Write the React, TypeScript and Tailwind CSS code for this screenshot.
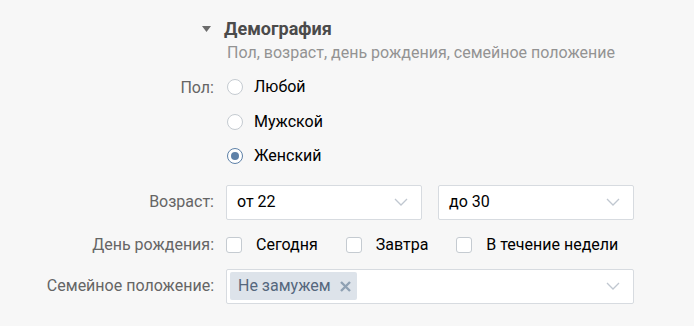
import type { ReactNode } from 'react'

function Chevron() {
  return (
    <svg width="14" height="8" viewBox="0 0 14 8" fill="none" className="shrink-0">
      <path d="M1 1l6 6 6-6" stroke="#c0c7d0" strokeWidth="1.3" />
    </svg>
  )
}

function Radio({ label, checked }: { label: string; checked?: boolean }) {
  return (
    <div className="flex h-[34.5px] items-center gap-[11px]">
      <span
        className={
          checked
            ? 'flex h-4 w-4 items-center justify-center rounded-full border border-[#5e81a8] bg-white'
            : 'h-4 w-4 rounded-full border border-[#c5cbd1] bg-white'
        }
      >
        {checked && <span className="h-[8px] w-[8px] rounded-full bg-[#5e81a8]" />}
      </span>
      <span className="text-[16px] text-black">{label}</span>
    </div>
  )
}

function Checkbox({ label }: { label: string }) {
  return (
    <div className="flex items-center gap-[14px]">
      <span className="h-4 w-4 rounded-[3px] border border-[#c5cbd1] bg-white" />
      <span className="text-[16px] text-black">{label}</span>
    </div>
  )
}

function Select({ children }: { children: ReactNode }) {
  return (
    <div className="flex h-[35px] flex-1 items-center justify-between rounded-[2px] border border-[#d7dbe0] bg-white pl-[10px] pr-[13px]">
      <div className="flex items-center">{children}</div>
      <Chevron />
    </div>
  )
}

function Row({ label, children, className }: { label: string; children: ReactNode; className?: string }) {
  return (
    <div className={`flex ${className ?? ''}`}>
      <div className="w-[214px] shrink-0 text-right text-[16px] text-[#656565]">{label}</div>
      <div className="ml-3 w-[408px]">{children}</div>
    </div>
  )
}

export default function App() {
  return (
    <div className="h-[326px] w-[694px] bg-[#f7f7f7] font-['Roboto',sans-serif]">
      <div className="flex items-center pt-[15px]">
        <svg width="9" height="6" viewBox="0 0 9 6" className="ml-[202px]">
          <path d="M0 0h9L4.5 6z" fill="#6b6b6b" />
        </svg>
        <span className="ml-[13px] text-[18px] font-bold text-[#4b4b4b]">Демография</span>
      </div>
      <div className="ml-[227px] mt-[-1px] text-[16px] text-[#939393]">
        Пол, возраст, день рождения, семейное положение
      </div>

      <div className="mt-[5px] flex">
        <div className="w-[214px] shrink-0 pt-[6px] text-right text-[16px] text-[#656565]">Пол:</div>
        <div className="ml-[13px]">
          <Radio label="Любой" />
          <Radio label="Мужской" />
          <Radio label="Женский" checked />
        </div>
      </div>

      <Row label="Возраст:" className="mt-[11px] items-center">
        <div className="flex gap-4">
          <Select>
            <span className="text-[16px] text-black">от 22</span>
          </Select>
          <Select>
            <span className="text-[16px] text-black">до 30</span>
          </Select>
        </div>
      </Row>

      <Row label="День рождения:" className="mt-[13px] items-center">
        <div className="flex gap-[28px]">
          <Checkbox label="Сегодня" />
          <Checkbox label="Завтра" />
          <Checkbox label="В течение недели" />
        </div>
      </Row>

      <Row label="Семейное положение:" className="mt-[12px] items-center">
        <div className="flex h-[35px] items-center justify-between rounded-[2px] border border-[#d7dbe0] bg-white pl-[3px] pr-[13px]">
          <div className="flex h-[28px] items-center gap-[8px] rounded-[2px] bg-[#dde3ea] pl-[8px] pr-[5px]">
            <span className="text-[16px] text-[#55677d]">Не замужем</span>
            <svg width="13" height="13" viewBox="0 0 13 13">
              <path d="M2 2l9 9M11 2l-9 9" stroke="#8fa1b3" strokeWidth="2.4" />
            </svg>
          </div>
          <Chevron />
        </div>
      </Row>
    </div>
  )
}
